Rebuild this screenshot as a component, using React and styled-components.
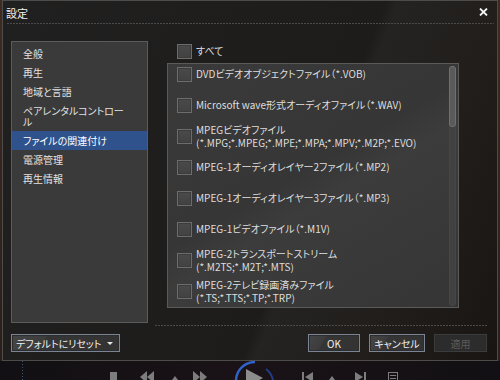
import React from 'react'
import styled, { createGlobalStyle } from 'styled-components'

const GlobalStyle = createGlobalStyle`
  html, body { margin: 0; padding: 0; background: #141216; }
  body {
    font-family: "Noto Sans CJK JP", "Noto Sans", sans-serif;
    font-feature-settings: "palt";
  }
`

const categories = [
  { label: '全般' },
  { label: '再生' },
  { label: '地域と言語' },
  { label: 'ペアレンタルコントロー', tail: 'ル' },
  { label: 'ファイルの関連付け', active: true },
  { label: '電源管理' },
  { label: '再生情報' },
]

const fileTypes = [
  ['DVDビデオオブジェクトファイル（*.VOB)'],
  ['Microsoft wave形式オーディオファイル（*.WAV)'],
  ['MPEGビデオファイル', '(*.MPG;*.MPEG;*.MPE;*.MPA;*.MPV;*.M2P;*.EVO)'],
  ['MPEG-1オーディオレイヤー2ファイル（*.MP2)'],
  ['MPEG-1オーディオレイヤー3ファイル（*.MP3)'],
  ['MPEG-1ビデオファイル（*.M1V)'],
  ['MPEG-2トランスポートストリーム', '(*.M2TS;*.M2T;*.MTS)'],
  ['MPEG-2テレビ録画済みファイル', '(*.TS;*.TTS;*.TP;*.TRP)'],
]

export const App = () => {
  return (
    <Stage>
      <GlobalStyle />
      <DialogRow>
        <Dialog>
          <TitleBar>
            <Title>設定</Title>
            <svg width="9" height="8" viewBox="0 0 9 8">
              <path d="M1 0.5 L8 7.5 M8 0.5 L1 7.5" stroke="#f2f2f2" strokeWidth="1.8" />
            </svg>
          </TitleBar>
          <Dashed $indent="0 3px 0 4px" />
          <Body>
            <Sidebar>
              {categories.map((c) => (
                <NavItem key={c.label} $active={c.active}>
                  {c.label}
                  {c.tail && <br />}
                  {c.tail}
                </NavItem>
              ))}
            </Sidebar>
            <RightCol>
              <AllRow>
                <Check />
                <RowLabel>すべて</RowLabel>
              </AllRow>
              <Panel>
                <List>
                  {fileTypes.map((lines) => (
                    <Row key={lines[0]}>
                      <Check />
                      <RowLabel>
                        {lines.map((l) => (
                          <div key={l}>{l}</div>
                        ))}
                      </RowLabel>
                    </Row>
                  ))}
                </List>
                <Track>
                  <Thumb />
                </Track>
              </Panel>
              <Dashed $indent="17px 0 0 0" />
            </RightCol>
          </Body>
          <Footer>
            <Button $w="109px" $left>
              デフォルトにリセット
              <Caret />
            </Button>
            <ButtonGroup>
              <Button $w="52px">OK</Button>
              <Button $w="56px">キャンセル</Button>
              <Button $w="53px" $disabled>適用</Button>
            </ButtonGroup>
          </Footer>
        </Dialog>
      </DialogRow>
      <Player>
        <DotLine />
        <Icon $ml="87px" width="8" height="19">
          <rect x="0" y="11" width="7" height="10" />
        </Icon>
        <Icon $ml="22px" width="14" height="19">
          <polygon points="7,10 0,16 7,22" />
          <polygon points="14,10 7,16 14,22" />
        </Icon>
        <Icon $ml="18px" width="6" height="19">
          <polygon points="3,15 0,19 6,19" />
        </Icon>
        <Icon $ml="15px" width="14" height="19">
          <polygon points="0,10 7,16 0,22" />
          <polygon points="7,10 14,16 7,22" />
        </Icon>
        <Icon $ml="26px" width="42" height="19">
          <path d="M3 19 A19 19 0 0 1 22 1" stroke="#2f63c8" strokeWidth="2.5" fill="none" />
          <path d="M33 8 A19 19 0 0 1 40 19" stroke="#1f3e86" strokeWidth="2" fill="none" />
          <polygon points="13,8 30,17 13,26" fill="#8c8c8c" />
        </Icon>
        <Icon $ml="27px" width="11" height="19">
          <rect x="0" y="11" width="2" height="10" />
          <polygon points="11,11 3,16 11,21" />
        </Icon>
        <Icon $ml="16px" width="6" height="19">
          <polygon points="3,15 0,19 6,19" />
        </Icon>
        <Icon $ml="20px" width="11" height="19">
          <polygon points="0,11 8,16 0,21" />
          <rect x="9" y="11" width="2" height="10" />
        </Icon>
        <Icon $ml="22px" width="10" height="19">
          <rect x="0.5" y="11.5" width="9" height="10" fill="none" stroke="#7d7d7d" />
          <rect x="2" y="14" width="6" height="1" />
          <rect x="2" y="17" width="6" height="1" />
        </Icon>
      </Player>
    </Stage>
  )
}

const Stage = styled.div`
  width: 500px;
  height: 380px;
  overflow: hidden;
  background: #141216;
`

const DialogRow = styled.div`
  padding: 0 2px;
  background: linear-gradient(180deg, #3e2b22, #2b1f1a);
`

const Dialog = styled.div`
  box-sizing: border-box;
  width: 496px;
  height: 361px;
  border: 1px solid #4e4c4b;
  display: flex;
  flex-direction: column;
  background: linear-gradient(
    112deg,
    #212020 0%,
    #1d1c1b 60%,
    #252321 62%,
    #211e1c 78%,
    #191513 100%
  );
`

const TitleBar = styled.div`
  height: 22px;
  display: flex;
  align-items: center;
  justify-content: space-between;
  padding: 0 9px 0 3px;
`

const Title = styled.span`
  color: #f0f0f0;
  font-size: 11px;
  line-height: 1;
  padding-top: 2px;
`

const Dashed = styled.div`
  height: 1px;
  margin: ${(p) => p.$indent};
  background: repeating-linear-gradient(90deg, #4a4a4a 0 2px, transparent 2px 3px);
  flex-shrink: 0;
`

const Body = styled.div`
  display: flex;
  align-items: flex-start;
  padding: 17px 10px 0 8px;
`

const Sidebar = styled.div`
  box-sizing: border-box;
  width: 137px;
  height: 282px;
  border: 1px solid #5b5b5b;
  background: #3a3a3a;
  padding-top: 2px;
`

const NavItem = styled.div`
  padding: 4px 4px 4px 11px;
  font-size: 10px;
  line-height: 11px;
  color: ${(p) => (p.$active ? '#ffffff' : '#e2e2e2')};
  background: ${(p) => (p.$active ? '#30528c' : 'transparent')};
`

const RightCol = styled.div`
  width: 332px;
  margin-left: 7px;
  display: flex;
  flex-direction: column;
`

const AllRow = styled.div`
  height: 22px;
  display: flex;
  align-items: center;
  gap: 4px;
  padding-left: 22px;
  margin-top: -1px;
`

const Check = styled.span`
  box-sizing: border-box;
  width: 15px;
  height: 15px;
  flex-shrink: 0;
  border: 1px solid #6c6c6c;
  background: linear-gradient(180deg, #4a4a4a, #424242);
  box-shadow: inset 0 0 0 1px #3c3c3c;
`

const RowLabel = styled.div`
  font-size: 10px;
  line-height: 12.5px;
  color: #dedede;
  white-space: nowrap;
`

const Panel = styled.div`
  box-sizing: border-box;
  margin-left: 12px;
  margin-top: 1px;
  width: 292px;
  height: 245px;
  border: 1px solid #5a5a5a;
  display: flex;
  background: linear-gradient(150deg, #3a3a3a 0%, #363636 45%, #3c3c3c 55%, #353535 100%);
`

const List = styled.div`
  flex: 1;
  padding-left: 9px;
  overflow: hidden;
`

const Row = styled.div`
  height: 21px;
  margin-bottom: 10px;
  display: flex;
  align-items: center;
  gap: 4px;
`

const Track = styled.div`
  box-sizing: border-box;
  width: 7px;
  margin: 2px 2px 1px 0;
  border-radius: 3px;
  background: #414141;
  border: 1px solid #464646;
`

const Thumb = styled.div`
  box-sizing: border-box;
  height: 61px;
  margin: -1px;
  border-radius: 3px;
  background: #5a5a5a;
  border: 1px solid #707070;
`

const Footer = styled.div`
  display: flex;
  justify-content: space-between;
  padding: 0 10px 0 8px;
  margin-top: 8px;
`

const ButtonGroup = styled.div`
  display: flex;
  gap: 9px;
`

const Button = styled.div`
  box-sizing: border-box;
  width: ${(p) => p.$w};
  height: 18px;
  display: flex;
  align-items: center;
  justify-content: ${(p) => (p.$left ? 'space-between' : 'center')};
  padding: ${(p) => (p.$left ? '0 6px 0 4px' : '0')};
  font-size: 10px;
  color: ${(p) => (p.$disabled ? '#5c5c5c' : '#f0f0f0')};
  border: 1px solid ${(p) => (p.$disabled ? '#3c3c3c' : '#7a8494')};
  box-shadow: inset 0 0 0 1px ${(p) => (p.$disabled ? '#2a2a2a' : '#2c2c2c')};
  background: ${(p) =>
    p.$disabled
      ? '#2c2c2c'
      : 'linear-gradient(120deg, #454545 0%, #3c3c3c 30%, #353535 31%, #333333 100%)'};
`

const Caret = styled.span`
  width: 0;
  height: 0;
  border-left: 3px solid transparent;
  border-right: 3px solid transparent;
  border-top: 3px solid #e8e8e8;
`

const Player = styled.div`
  height: 19px;
  display: flex;
  align-items: flex-start;
  background: linear-gradient(90deg, #121014 0%, #1a1216 50%, #121014 100%);
`

const DotLine = styled.div`
  width: 1px;
  height: 19px;
  margin-left: 22px;
  background: repeating-linear-gradient(180deg, #3c5470 0 1px, transparent 1px 3px);
`

const Icon = styled.svg`
  flex-shrink: 0;
  margin-left: ${(p) => p.$ml};
  fill: #7d7d7d;
`

export default App
